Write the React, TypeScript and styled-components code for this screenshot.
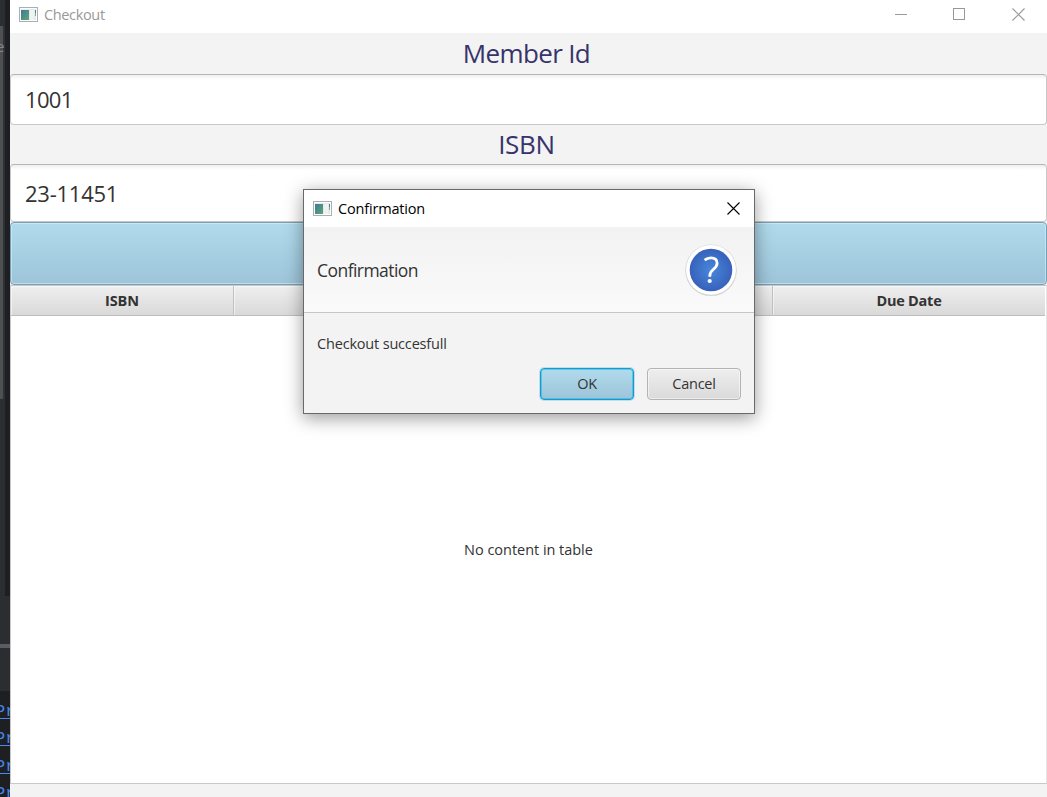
import React from "react";
import styled, { createGlobalStyle, css } from "styled-components";

const GlobalStyle = createGlobalStyle`
  * { box-sizing: border-box; }
  body { margin: 0; background: #f3f3f3; }
`;

const Desktop = styled.div`
  position: relative;
  display: flex;
  width: 1047px;
  height: 797px;
  overflow: hidden;
  font-family: "Open Sans", "Noto Sans", sans-serif;
  font-size: 14px;
  color: #333;
`;

/* Editor visible behind the window */
const Editor = styled.div`
  display: flex;
  flex-direction: column;
  flex: none;
  width: 10px;
  height: 797px;
  overflow: hidden;
  background: #1e1f22;
`;

const EditorTop = styled.div`
  height: 26px;
  flex: none;
  background: linear-gradient(90deg, #2b2d30 5px, #1e1f22 5px);
`;

const EditorPane = styled.div`
  height: 373px;
  flex: none;
  padding-top: 10px;
  line-height: 20px;
  font-size: 15px;
  color: #85878a;
  text-indent: -4px;
  background: linear-gradient(90deg, #4e5052 3px, #303134 3px, #303134 5px, #1e1f22 5px);
`;

const EditorGutter = styled.div`
  height: 197px;
  flex: none;
  background: linear-gradient(90deg, #2b2d30 5px, #1e1f22 5px);
`;

const ToolPanel = styled.div`
  height: 95px;
  flex: none;
  padding-top: 48px;
  background: #2b2d30;
`;

const Divider = styled.div`
  height: 4px;
  background: #5a5c64;
`;

const ConsoleLine = styled.div`
  height: 27.3px;
  flex: none;
  padding-top: 5px;
  line-height: 31px;
  font-family: "Liberation Mono", monospace;
  font-size: 17px;
  color: #4585e8;
  text-indent: -5px;
  white-space: nowrap;

  span {
    display: block;
    height: 23px;
    border-bottom: 1px solid #4c88f0;
  }
`;

const Window = styled.main`
  display: flex;
  flex-direction: column;
  width: 1037px;
  background: #f3f3f3;
`;

const TitleBar = styled.header<{ $active?: boolean }>`
  display: flex;
  align-items: center;
  flex: none;
  height: ${(p) => (p.$active ? 37 : 33)}px;
  padding: ${(p) => (p.$active ? "0 14px 0 9px" : "0 22px 4px 9px")};
  background: #fff;
  color: ${(p) => (p.$active ? "#000" : "#999")};
`;

const Text = styled.span<{ $size: number; $spacing?: number; $shift?: number }>`
  font-size: ${(p) => p.$size}px;
  letter-spacing: ${(p) => p.$spacing ?? 0}px;
  line-height: 1.3;
  padding-top: ${(p) => p.$shift ?? 0}px;
  white-space: nowrap;
`;

const WindowTitle = styled(Text)`
  margin-left: 6px;
  flex: 1;
`;

const Controls = styled.div`
  display: flex;
  gap: 45px;
  svg:last-child { margin-left: 1px; }
`;

const Glyph = styled.svg`
  display: block;
  flex: none;
  shape-rendering: crispEdges;
`;

const FieldLabel = styled.label<{ $height: number }>`
  display: flex;
  justify-content: center;
  align-items: center;
  flex: none;
  height: ${(p) => p.$height}px;
  padding-right: 4px;
  color: #36346a;
`;

const Field = styled.div<{ $height: number }>`
  display: flex;
  align-items: center;
  flex: none;
  height: ${(p) => p.$height}px;
  padding-left: 14px;
  border: 1px solid #c8c8c8;
  border-top-color: #b5b5b5;
  border-radius: 4px;
  background: linear-gradient(#efefef, #fff 5px);
  color: #333;
`;

const blueFace = css`
  background: linear-gradient(#b1dbec, #9dc4d9);
  box-shadow: inset 0 0 0 1px rgba(220, 243, 252, 0.55);
`;

const SubmitButton = styled.button`
  flex: none;
  height: 63px;
  padding: 0;
  border: 1px solid #77a0b5;
  border-radius: 4px;
  ${blueFace}
`;

const Table = styled.section`
  display: flex;
  flex-direction: column;
  flex: none;
  height: 499px;
  border: 1px solid #c8c8c8;
  border-right-color: #e4e4e4;
  background: #fff;
`;

const HeaderRow = styled.div`
  display: grid;
  grid-template-columns: 223px 539px 272px;
  flex: none;
  height: 30px;
`;

const HeaderCell = styled.div`
  display: flex;
  align-items: center;
  justify-content: center;
  border-right: 1px solid #c1c1c1;
  border-bottom: 1px solid #bdbdbd;
  box-shadow: inset 1px 1px 0 rgba(255, 255, 255, 0.55);
  background: linear-gradient(#efefef, #d9d9d9);
  font-weight: 700;

  &:last-child { border-right: 0; }
`;

const Placeholder = styled.div`
  display: flex;
  align-items: center;
  justify-content: center;
  flex: 1;
`;

const Dialog = styled.div`
  position: absolute;
  left: 303px;
  top: 189px;
  display: flex;
  flex-direction: column;
  width: 452px;
  height: 225px;
  border: 1px solid #696969;
  background: #f3f3f3;
  box-shadow: 0 4px 17px rgba(0, 0, 0, 0.4);
`;

const DialogHeader = styled.div`
  display: flex;
  align-items: center;
  justify-content: space-between;
  flex: none;
  height: 86px;
  padding: 0 16px 0 13px;
  border-bottom: 1px solid #c6c6c6;
  background: linear-gradient(#f2f2f2, #fafafa);
`;

const DialogBody = styled.div`
  display: flex;
  flex-direction: column;
  flex: 1;
  padding: 21px 13px 13px;
  justify-content: space-between;
`;

const Actions = styled.div`
  display: flex;
  justify-content: flex-end;
  gap: 13px;
`;

const ActionButton = styled.button<{ $primary?: boolean }>`
  width: 94px;
  height: 32px;
  padding: 0;
  border: 1px solid #b4b4b4;
  border-radius: 4px;
  background: linear-gradient(#eeeeee, #dadada);
  box-shadow: inset 0 0 0 1px rgba(255, 255, 255, 0.5);
  color: #333;
  font-family: inherit;

  ${(p) =>
    p.$primary &&
    css`
      border-color: #069fd6;
      background: linear-gradient(#b1dbec, #9dc4d9);
      box-shadow: inset 0 0 0 1px rgba(3, 158, 211, 0.38), 0 0 0 1px rgba(3, 158, 211, 0.22);
    `}
`;

function AppIcon({ id }: { id: string }) {
  return (
    <Glyph width="19" height="15" viewBox="0 0 19 15">
      <defs>
        <linearGradient id={id} x1="0" y1="0" x2="1" y2="1">
          <stop offset="0" stopColor="#3f799a" />
          <stop offset="1" stopColor="#5ca873" />
        </linearGradient>
      </defs>
      <path d="M.5.5h18v14H.5z" fill="#fff" stroke="#a7afb7" />
      <path d="M2 2h15v11H2z" fill="#e7eaed" />
      <path d="M2 3h8v10H2z" fill={`url(#${id})`} />
      <path d="M11 3h4v10h-4z" fill="#f2f2f2" />
      <path d="M16 3h1v3h-1z" fill="#3f8894" />
      <path d="M16 6h1v3h-1z" fill="#74b77e" />
    </Glyph>
  );
}

function CloseIcon() {
  return (
    <svg width="13" height="13" viewBox="0 0 13 13" style={{ display: "block" }}>
      <path d="M.5.5l12 12M12.5.5l-12 12" stroke="currentColor" strokeWidth="1.1" />
    </svg>
  );
}

function QuestionIcon() {
  return (
    <svg width="54" height="54" viewBox="0 0 54 54">
      <defs>
        <radialGradient id="question-face">
          <stop offset="0" stopColor="#4788dc" />
          <stop offset="1" stopColor="#3861ba" />
        </radialGradient>
      </defs>
      <circle cx="27" cy="27.3" r="25.8" fill="#d5d5d5" />
      <circle cx="27" cy="26.8" r="24.9" fill="#fff" />
      <circle cx="27" cy="27" r="21.3" fill="url(#question-face)" />
      <path
        d="M21.3 17.2c1.8-1.5 3.9-2.3 6.3-2.3 4 0 6.2 2.1 6.2 5.4 0 2.6-1.3 4.2-3.9 6.2-2.6 2.1-3.4 3.5-3.4 6.4v.8"
        fill="none"
        stroke="#fff"
        strokeWidth="2.8"
        transform="translate(-0.7 0)"
      />
      <circle cx="25.7" cy="38" r="2.1" fill="#fff" />
    </svg>
  );
}

export default function App() {
  return (
    <Desktop>
      <GlobalStyle />
      <Editor>
        <EditorTop />
        <EditorPane>e</EditorPane>
        <EditorGutter />
        <ToolPanel>
          <Divider />
        </ToolPanel>
        {[0, 1, 2, 3].map((line) => (
          <ConsoleLine key={line}>
            <span>Pr</span>
          </ConsoleLine>
        ))}
      </Editor>
      <Window>
        <TitleBar>
          <AppIcon id="window-icon" />
          <WindowTitle $size={14.5} $spacing={-0.35} $shift={1}>Checkout</WindowTitle>
          <Controls>
            <Glyph width="13" height="13" viewBox="0 0 13 13">
              <path d="M0 6h12v1H0z" fill="currentColor" />
            </Glyph>
            <Glyph width="13" height="13" viewBox="0 0 13 13">
              <path d="M.5.5h11v11H.5z" fill="none" stroke="currentColor" />
            </Glyph>
            <CloseIcon />
          </Controls>
        </TitleBar>
        <FieldLabel $height={41}>
          <Text $size={26} $spacing={-0.65}>Member Id</Text>
        </FieldLabel>
        <Field $height={51}>
          <Text $size={22} $spacing={-0.7}>1001</Text>
        </Field>
        <FieldLabel $height={39}>
          <Text $size={26} $spacing={-0.3}>ISBN</Text>
        </FieldLabel>
        <Field $height={58}>
          <Text $size={22} $spacing={-0.25}>23-11451</Text>
        </Field>
        <SubmitButton aria-label="Checkout" />
        <Table>
          <HeaderRow>
            <HeaderCell>
              <Text $size={14.5} $spacing={-0.1} $shift={2}>ISBN</Text>
            </HeaderCell>
            <HeaderCell />
            <HeaderCell>
              <Text $size={14.5} $spacing={-0.25} $shift={2}>Due Date</Text>
            </HeaderCell>
          </HeaderRow>
          <Placeholder>
            <Text $size={14.5} $spacing={-0.03} $shift={2}>No content in table</Text>
          </Placeholder>
        </Table>
      </Window>
      <Dialog role="dialog" aria-label="Confirmation">
        <TitleBar $active>
          <AppIcon id="dialog-icon" />
          <WindowTitle $size={14.5} $spacing={-0.18} $shift={2}>Confirmation</WindowTitle>
          <CloseIcon />
        </TitleBar>
        <DialogHeader>
          <Text $size={17.5} $spacing={-0.55} $shift={2}>Confirmation</Text>
          <QuestionIcon />
        </DialogHeader>
        <DialogBody>
          <Text $size={14.5} $spacing={-0.18} $shift={1}>Checkout succesfull</Text>
          <Actions>
            <ActionButton $primary>
              <Text $size={14.5} $spacing={-0.4}>OK</Text>
            </ActionButton>
            <ActionButton>
              <Text $size={14.5} $spacing={-0.25}>Cancel</Text>
            </ActionButton>
          </Actions>
        </DialogBody>
      </Dialog>
    </Desktop>
  );
}
